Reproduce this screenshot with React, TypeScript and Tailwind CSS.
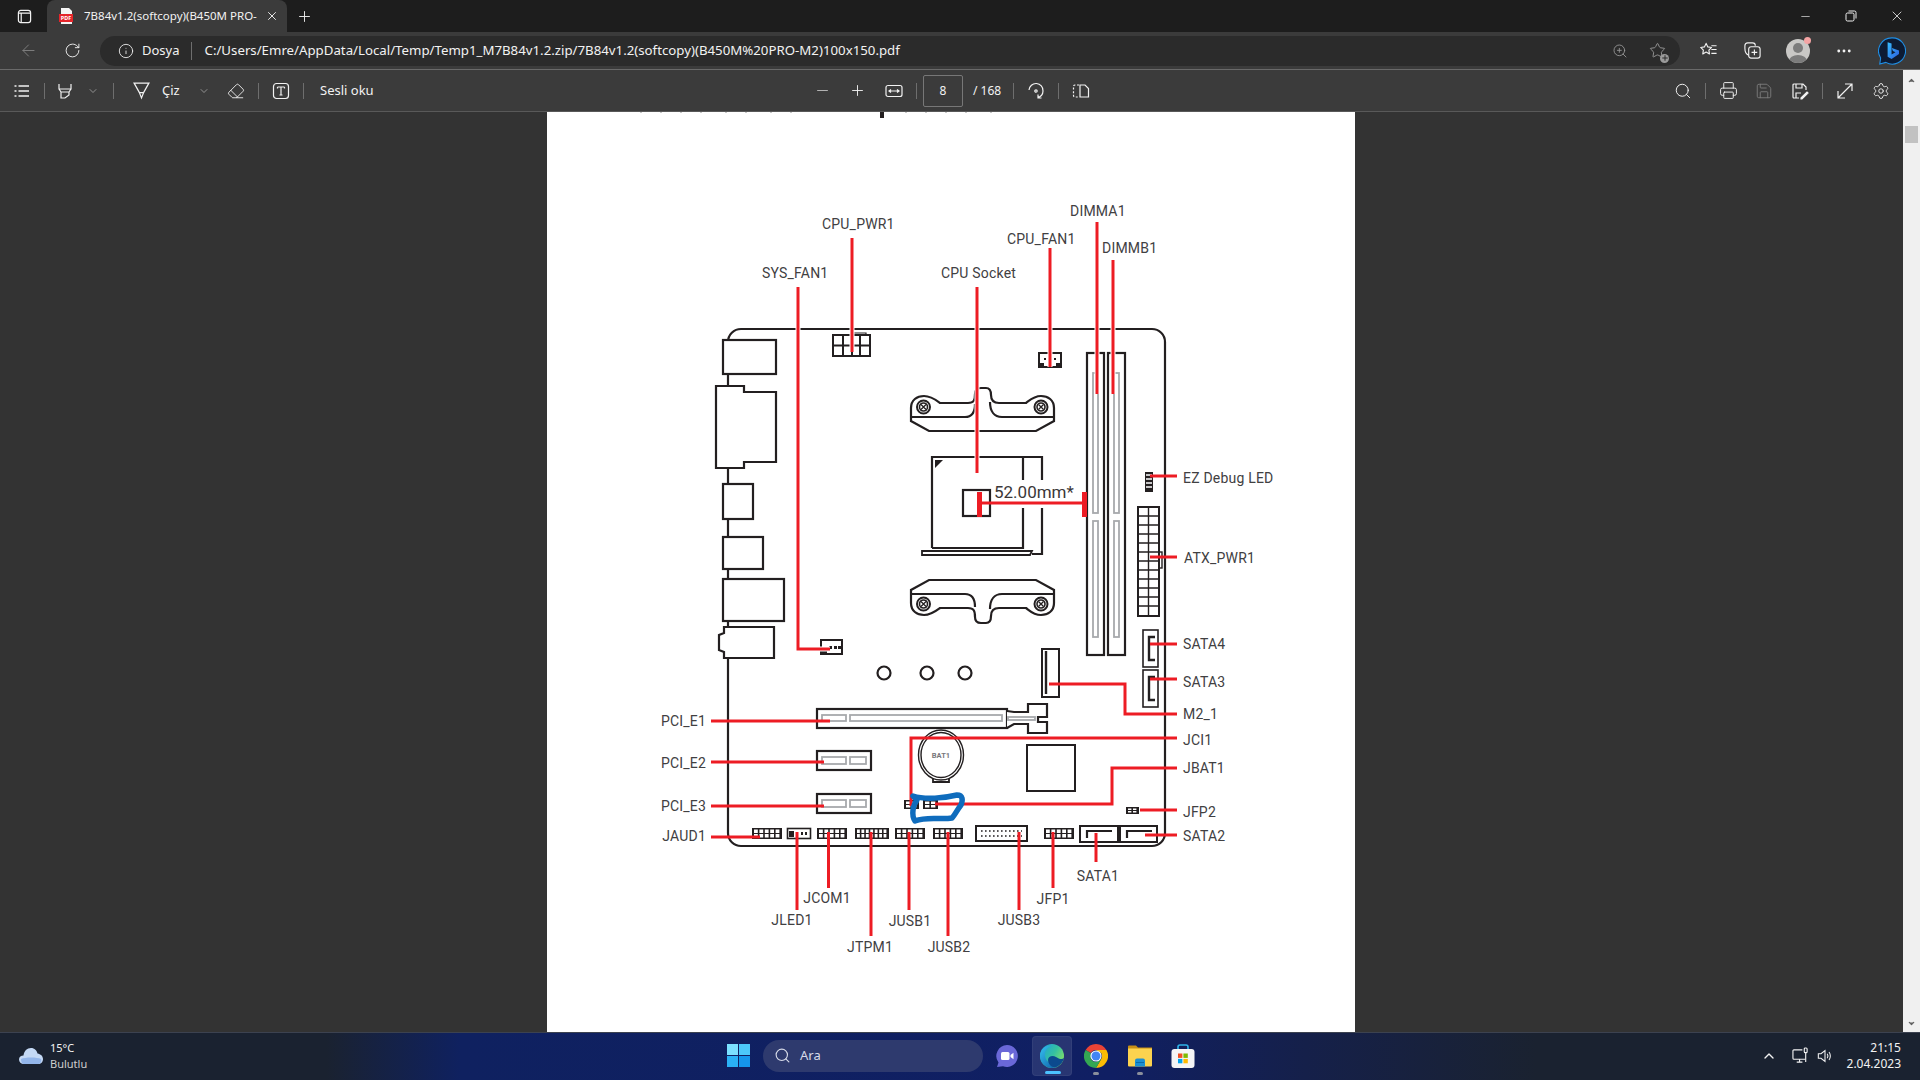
import React from "react";
import { ChevronDown, ChevronUp, Eraser, Minus, Plus, RotateCw, Search, Settings, X, Printer, Save, MoreHorizontal, Info, ArrowLeft, Star, ZoomIn } from "lucide-react";

const RED = "#ed1c24";
const INK = "#231f20";
const SLOT = "#a7a9ac";

const redLines = [
  "798,287 798,649 830,649",
  "852,238 852,352",
  "977,287 977,473",
  "1050,248 1050,367",
  "1097,222 1097,394",
  "1113,260 1113,394",
  "980,503 1083,503",
  "1150,476 1177,476",
  "1150,557 1177,557",
  "1150,644 1177,644",
  "1150,679 1177,679",
  "1049,684 1125,684 1125,714 1177,714",
  "711,721 830,721",
  "711,762 824,762",
  "711,806 824,806",
  "711,837 760,837",
  "1177,738 911,738 911,806",
  "1177,768 1112,768 1112,804 935,804",
  "1177,810 1140,810",
  "1177,835 1145,835",
  "1096,833 1096,862",
  "1053,832 1053,888",
  "1019,832 1019,910",
  "948,832 948,936",
  "909,832 909,910",
  "871,832 871,936",
  "828.5,832 828.5,888",
  "797,832 797,910",
];

type Label = { t: string; x: number; y: number; a?: "start" | "middle" | "end" };

const labels: Label[] = [
  { t: "CPU_PWR1", x: 822, y: 229 },
  { t: "DIMMA1", x: 1070, y: 216 },
  { t: "CPU_FAN1", x: 1007, y: 244 },
  { t: "DIMMB1", x: 1102, y: 253 },
  { t: "SYS_FAN1", x: 762, y: 278 },
  { t: "CPU Socket", x: 941, y: 278 },
  { t: "EZ Debug LED", x: 1183, y: 483 },
  { t: "ATX_PWR1", x: 1184, y: 563 },
  { t: "SATA4", x: 1183, y: 649 },
  { t: "SATA3", x: 1183, y: 687 },
  { t: "M2_1", x: 1183, y: 719 },
  { t: "JCI1", x: 1183, y: 745 },
  { t: "JBAT1", x: 1183, y: 773 },
  { t: "JFP2", x: 1183, y: 817 },
  { t: "SATA2", x: 1183, y: 841 },
  { t: "PCI_E1", x: 706, y: 726, a: "end" },
  { t: "PCI_E2", x: 706, y: 768, a: "end" },
  { t: "PCI_E3", x: 706, y: 811, a: "end" },
  { t: "JAUD1", x: 706, y: 841, a: "end" },
  { t: "SATA1", x: 1098, y: 881, a: "middle" },
  { t: "JFP1", x: 1053, y: 904, a: "middle" },
  { t: "JCOM1", x: 827, y: 903, a: "middle" },
  { t: "JLED1", x: 792, y: 925, a: "middle" },
  { t: "JUSB1", x: 910, y: 926, a: "middle" },
  { t: "JUSB3", x: 1019, y: 925, a: "middle" },
  { t: "JTPM1", x: 870, y: 952, a: "middle" },
  { t: "JUSB2", x: 949, y: 952, a: "middle" },
];

const PinHeader = ({ x, y, w, h, cols }: { x: number; y: number; w: number; h: number; cols: number }) => {
  const step = (w - 3) / cols;
  return (
    <g>
      <rect x={x} y={y} width={w} height={h} fill={INK} />
      {Array.from({ length: cols }).map((_, i) => (
        <g key={i}>
          <rect x={x + 2 + i * step} y={y + 1.5} width={step - 1.6} height={(h - 4) / 2} fill="#fff" />
          <rect x={x + 2 + i * step} y={y + h / 2 + 0.5} width={step - 1.6} height={(h - 4) / 2} fill="#fff" />
        </g>
      ))}
    </g>
  );
};

const Screw = ({ cx, cy }: { cx: number; cy: number }) => (
  <g>
    <circle cx={cx} cy={cy} r="6.5" strokeWidth="2" />
    <circle cx={cx} cy={cy} r="4" strokeWidth="1.6" />
    <path d={`M${cx - 2.5} ${cy - 2.5} L${cx + 2.5} ${cy + 2.5} M${cx + 2.5} ${cy - 2.5} L${cx - 2.5} ${cy + 2.5}`} strokeWidth="1.3" />
  </g>
);

const Bracket = () => (
  <g fill="none" stroke={INK} strokeWidth="2.2">
    <path d="M911 421 L911 408 C911 400 917 396 924 396 C931 396 936 400 940 403 L968 403 C974 403 975 400 975 394 C975 390 977 388 981 388 L986 388 C990 388 991 391 991 395 C991 400 993 403 999 403 L1026 403 C1030 400 1034 396 1041 396 C1048 396 1054 400 1054 408 L1054 421 L1036 431 L929 431 Z" fill="#fff" />
    <path d="M911 417 L965 417 C972 417 975 413 975 404 M1054 417 L1002 417 C994 417 990 411 990 402" />
    <Screw cx={923.5} cy={407} />
    <Screw cx={1041} cy={407} />
  </g>
);

const Diagram = () => (
  <svg viewBox="547 112 808 920" className="block h-[920px] w-[808px] font-['Roboto',sans-serif]">
    <rect x="880" y="112" width="4" height="6" fill={INK} />
    <g fill="#c9c9c9">
      {[640, 660, 680, 700, 725, 745, 770, 790, 905, 925, 945, 965, 990].map((x) => (
        <rect key={x} x={x} y="112" width="2" height="1" />
      ))}
    </g>
    <rect x="728" y="329" width="437" height="517" rx="13" fill="#fff" stroke={INK} strokeWidth="2.2" />

    {/* io panel */}
    <g fill="#fff" stroke={INK} strokeWidth="2.2">
      <rect x="723" y="340" width="53" height="34" />
      <path d="M716 386 L744 386 L744 392 L776 392 L776 462 L744 462 L744 468 L716 468 Z" />
      <rect x="723" y="484" width="30" height="35" />
      <rect x="723" y="537" width="40" height="32" />
      <rect x="723" y="579" width="61" height="42" />
      <path d="M724 627 L774 627 L774 658 L724 658 L724 652 L719 650 L719 635 L724 633 Z" />
    </g>

    {/* cpu power and fan */}
    <g fill="none" stroke={INK} strokeWidth="2">
      <path d="M851 335 L851 333 L866 333 L866 335" strokeWidth="1.2" />
      <rect x="833" y="335" width="37" height="21" fill="#fff" />
      <path d="M833 345.5 L870 345.5 M843 335 L843 356 M852 335 L852 356 M860 335 L860 356" />
      <rect x="1039" y="353" width="22" height="14" fill="#fff" />
    </g>
    <path d="M1040 363 h4 v3 h-4 z M1056 363 h4 v3 h-4 z M1044 358 h2 v2 h-2 z M1054 358 h2 v2 h-2 z" fill={INK} />

    <Bracket />
    <g transform="translate(0 1011) scale(1 -1)">
      <Bracket />
    </g>

    {/* socket */}
    <g fill="none" stroke={INK} strokeWidth="2.2">
      <path d="M932 548 L932 457 L1042 457 L1042 554 L1032 554" />
      <path d="M1023 457 L1023 548 L932 548" />
    </g>
    <path d="M935 460 L943 460 L935 468 Z" fill={INK} />
    <path d="M922 551 L1032 551 L1030 555 L922 555 Z" fill="#fff" stroke={INK} strokeWidth="1.8" />
    <rect x="990" y="480" width="88" height="28" fill="#fff" />
    <rect x="963" y="490" width="27" height="26" fill="#fff" stroke={INK} strokeWidth="2.2" />

    {/* dimm slots */}
    <g fill="#fff" stroke={INK} strokeWidth="2.2">
      <rect x="1087" y="353" width="17" height="302" />
      <rect x="1108" y="353" width="17" height="302" />
    </g>
    <g fill="none" stroke={SLOT} strokeWidth="1.8">
      <rect x="1093" y="373" width="5" height="140" />
      <rect x="1093" y="521" width="5" height="116" />
      <rect x="1114" y="373" width="5" height="140" />
      <rect x="1114" y="521" width="5" height="116" />
    </g>

    {/* right edge connectors */}
    <rect x="1145" y="472" width="8" height="20" fill={INK} />
    <path d="M1146 475 h6 M1146 479 h6 M1146 483 h6 M1146 487 h6" stroke="#fff" strokeWidth="1.4" />
    <rect x="1159" y="552" width="3" height="16" fill="#fff" stroke={INK} strokeWidth="1.4" />
    <rect x="1138" y="507" width="21" height="109" fill="#fff" stroke={INK} strokeWidth="2" />
    <path
      d="M1148.5 507 V616 M1138 516 H1159 M1138 525 H1159 M1138 534 H1159 M1138 543 H1159 M1138 552 H1159 M1138 561 H1159 M1138 570 H1159 M1138 579 H1159 M1138 588 H1159 M1138 597 H1159 M1138 606 H1159"
      stroke={INK}
      strokeWidth="1.4"
    />
    <g fill="none" stroke={INK}>
      <rect x="1143" y="630" width="15" height="37" strokeWidth="1.6" />
      <path d="M1155 637 H1149 V660 H1155" strokeWidth="2.4" />
      <rect x="1143" y="670" width="15" height="37" strokeWidth="1.6" />
      <path d="M1155 677 H1149 V700 H1155" strokeWidth="2.4" />
      <rect x="1042" y="649" width="17" height="48" strokeWidth="2" />
      <path d="M1046 651 V694" strokeWidth="2.4" />
    </g>

    <g fill="#fff" stroke={INK} strokeWidth="2.2">
      <circle cx="884" cy="673" r="6.5" />
      <circle cx="927" cy="673" r="6.5" />
      <circle cx="965" cy="673" r="6.5" />
    </g>

    {/* fan header */}
    <rect x="821" y="640" width="21" height="14" fill="#fff" stroke={INK} strokeWidth="2" />
    <path d="M821 651 h6 v3 h-6 z M829 646 h3 v3 h-3 z M834 646 h3 v3 h-3 z M838 646 h3 v3 h-3 z" fill={INK} />

    {/* pci slots */}
    <g fill="#fff" stroke={INK} strokeWidth="2.2">
      <rect x="817" y="709" width="190" height="19" />
      <path d="M1007 711 L1014 712 L1028 712 L1028 704 L1047 704 L1047 717 L1038 717 L1038 722 L1047 722 L1047 733 L1028 733 L1028 724 L1014 724 L1007 728" />
      <rect x="817" y="751" width="54" height="19" />
      <rect x="817" y="794" width="54" height="19" />
    </g>
    <g fill="none" stroke={SLOT} strokeWidth="1.8">
      <rect x="822" y="715" width="24" height="6" />
      <rect x="850" y="715" width="152" height="6" />
      <rect x="1008" y="717" width="27" height="3" />
      <rect x="822" y="757" width="24" height="7" />
      <rect x="850" y="757" width="16" height="7" />
      <rect x="822" y="800" width="24" height="7" />
      <rect x="850" y="800" width="16" height="7" />
    </g>

    {/* battery */}
    <g fill="#fff" stroke={INK}>
      <path d="M933 775 L933 782 L949 782 L949 775" strokeWidth="1.8" />
      <ellipse cx="941" cy="755" rx="22.5" ry="25" strokeWidth="1.4" />
      <ellipse cx="941" cy="755" rx="20" ry="22.5" strokeWidth="1.4" />
    </g>
    <text x="941" y="758" textAnchor="middle" fontSize="7.5" fontWeight="700" fill="#77787b">BAT1</text>
    <rect x="1027" y="745" width="48" height="46" fill="#fff" stroke={INK} strokeWidth="2" />

    {/* bottom connectors */}
    <PinHeader x={904} y={800} w={15} h={9} cols={2} />
    <PinHeader x={923} y={800} w={15} h={9} cols={2} />
    <PinHeader x={1126} y={807} w={13} h={7} cols={2} />
    <PinHeader x={752} y={828} w={30} h={11} cols={5} />
    <rect x="787.5" y="828.5" width="23" height="10" fill="#fff" stroke={INK} strokeWidth="1.6" />
    <path d="M789 831 h5 v6 h-5 z M801 832 h2 v3 h-2 z M805 832 h2 v3 h-2 z" fill={INK} />
    <PinHeader x={817} y={828} w={30} h={11} cols={5} />
    <PinHeader x={855} y={828} w={34} h={11} cols={7} />
    <PinHeader x={895} y={828} w={30} h={11} cols={5} />
    <PinHeader x={933} y={828} w={30} h={11} cols={5} />
    <PinHeader x={1044} y={828} w={30} h={11} cols={5} />
    <rect x="976" y="826" width="51" height="15" fill="#fff" stroke={INK} strokeWidth="2" />
    <path d="M981 831 H1022 M981 836 H1022" stroke={INK} strokeWidth="1.6" strokeDasharray="1.6 2.4" />
    <g fill="#fff" stroke={INK}>
      <rect x="1080" y="826" width="38" height="16" strokeWidth="2" />
      <path d="M1112 831 H1087 V838" fill="none" strokeWidth="2.2" />
      <rect x="1120" y="826" width="37" height="16" strokeWidth="2" />
      <path d="M1152 831 H1127 V838" fill="none" strokeWidth="2.2" />
    </g>

    {/* leader lines */}
    <g fill="none" stroke="#fff" strokeWidth="5">
      {redLines.slice(0, 6).map((p) => (
        <polyline key={p} points={p} />
      ))}
    </g>
    <g fill="none" stroke={RED} strokeWidth="3">
      {redLines.map((p) => (
        <polyline key={p} points={p} />
      ))}
    </g>
    <rect x="977" y="492" width="5" height="25" fill={RED} />
    <rect x="1082" y="492" width="5" height="25" fill={RED} />
    <text x="994" y="498" fontSize="17" fill="#3b3738">52.00mm*</text>
    <g fontSize="14" fill="#414042" letterSpacing="0.2">
      {labels.map((l) => (
        <text key={l.t} x={l.x} y={l.y} textAnchor={l.a ?? "start"}>
          {l.t}
        </text>
      ))}
    </g>

    {/* hand drawn highlight */}
    <path
      d="M913 796 C925 800 945 798 957 795 C963 795 963 800 961 805 C957 810 955 815 952 818 C940 820 928 816 915 821 C911 815 913 805 917 800 Z"
      fill="none"
      stroke="#0f6cbd"
      strokeWidth="5.5"
      strokeLinejoin="round"
    />
  </svg>
);

const Divider = ({ className }: { className: string }) => <div className={`h-4 w-px shrink-0 bg-[#6e6e6e] ${className}`} />;

const Tool = ({ className = "", children }: { className?: string; children: React.ReactNode }) => (
  <div className={`flex h-7 w-7 shrink-0 items-center justify-center ${className}`}>{children}</div>
);

const EdgeLogo = () => (
  <svg viewBox="0 0 24 24" className="h-6 w-6">
    <defs>
      <linearGradient id="edgeA" x1="0" y1="0" x2="1" y2="1">
        <stop offset="0" stopColor="#35c1f1" />
        <stop offset="1" stopColor="#0c59a4" />
      </linearGradient>
      <linearGradient id="edgeB" x1="0" y1="0" x2="1" y2="0.6">
        <stop offset="0" stopColor="#1b9de2" />
        <stop offset="0.6" stopColor="#35c1a0" />
        <stop offset="1" stopColor="#7fe06a" />
      </linearGradient>
    </defs>
    <circle cx="12" cy="12" r="12" fill="url(#edgeB)" />
    <path d="M0 12 C0 5 6 1 12 2 C7 3 4 7 5 12 C6 18 13 23 19 22 C17 23 14 24 12 24 C5 24 0 18 0 12 Z" fill="url(#edgeA)" />
    <path d="M8 16 C8 12 13 11 16 13 C19 15 22 16 24 14 C23 19 18 24 13 23 C10 22 8 19 8 16 Z" fill="#0c4a8e" />
  </svg>
);

const ChromeLogo = () => (
  <svg viewBox="0 0 24 24" className="h-6 w-6">
    <path d="M12 0 A12 12 0 0 1 22.4 6 L12 6 A6 6 0 0 0 6.8 9 L1.6 6 A12 12 0 0 1 12 0 Z" fill="#ea4335" />
    <path d="M22.4 6 A12 12 0 0 1 12 24 L17.2 15 A6 6 0 0 0 17.2 9 L12 6 Z" fill="#fbbc04" />
    <path d="M1.6 6 L6.8 9 L6.8 15 A6 6 0 0 0 12 18 L17.2 15 L12 24 A12 12 0 0 1 1.6 6 Z" fill="#34a853" />
    <circle cx="12" cy="12" r="5.6" fill="#fff" />
    <circle cx="12" cy="12" r="4.5" fill="#4285f4" />
  </svg>
);

const FolderLogo = () => (
  <svg viewBox="0 0 24 22" className="h-[23px] w-6">
    <path d="M0 2 A1 1 0 0 1 1 1 H8 L10 3 H24 V6 H0 Z" fill="#c78f16" />
    <path d="M0 4 H24 V21 A1 1 0 0 1 23 22 H1 A1 1 0 0 1 0 21 Z" fill="#fcd34f" />
    <path d="M7 16 A2 2 0 0 1 9 14 H15 A2 2 0 0 1 17 16 V22 H7 Z" fill="#1d8fd1" />
    <path d="M8 18 H16" stroke="#0b6aa8" strokeWidth="1" />
  </svg>
);

const StoreLogo = () => (
  <svg viewBox="0 0 24 24" className="h-6 w-6">
    <path d="M7 7 V3 A2 2 0 0 1 9 1 H15 A2 2 0 0 1 17 3 V7" fill="none" stroke="#2fb4e9" strokeWidth="1.6" />
    <rect x="0.5" y="5" width="23" height="19" rx="3" fill="#f5f5f5" />
    <rect x="7" y="9.5" width="4.4" height="4.4" fill="#f25022" />
    <rect x="12.4" y="9.5" width="4.4" height="4.4" fill="#7fba00" />
    <rect x="7" y="14.9" width="4.4" height="4.4" fill="#00a4ef" />
    <rect x="12.4" y="14.9" width="4.4" height="4.4" fill="#ffb900" />
  </svg>
);

const BingLogo = () => (
  <svg viewBox="0 0 32 32" className="h-[30px] w-[30px]">
    <defs>
      <linearGradient id="bingB" x1="0" y1="0" x2="1" y2="1">
        <stop offset="0" stopColor="#37bdff" />
        <stop offset="1" stopColor="#2b5fe0" />
      </linearGradient>
    </defs>
    <path d="M16 1 A15 15 0 1 1 9 29 L2 31 L3 24 A15 15 0 0 1 16 1 Z" fill="#0d1b33" stroke="#1f8fe6" strokeWidth="1.2" />
    <path d="M11 6 L15.5 7.5 V20 L20 17.5 L17 16 L15.8 12.5 L24 15.5 V19.5 L15.5 25 L11 22.5 Z" fill="url(#bingB)" />
  </svg>
);

const App: React.FC = () => {
  return (
    <div className="flex h-[1080px] w-[1920px] flex-col overflow-hidden bg-[#333333] font-['Noto_Sans',sans-serif] text-[#f2f2f2]">
      {/* tab strip */}
      <div className="flex h-8 shrink-0 items-end bg-[#1d1d1d]">
        <div className="flex h-8 w-[47px] items-center justify-center pl-[1px]">
          <svg viewBox="0 0 16 16" className="h-[15px] w-[15px]" fill="none" stroke="#f2f2f2" strokeWidth="1.3">
            <rect x="1.5" y="1.5" width="13" height="13" rx="2.5" />
            <path d="M1.5 4.5 H14.5 M4.5 4.5 V14.5" />
          </svg>
        </div>
        <div className="flex h-8 w-[240px] items-center rounded-t-lg bg-[#3b3b3b] pl-[11px]">
          <svg viewBox="0 0 16 18" className="h-[18px] w-4 shrink-0">
            <path d="M3 1 H11 L14 4 V17 H3 Z" fill="#f4f4f4" />
            <rect x="1" y="7" width="14" height="8" fill="#e5252a" />
            <text x="8" y="13" fontSize="5.4" fontWeight="700" textAnchor="middle" fill="#fff">PDF</text>
          </svg>
          <span className="ml-[10px] w-[176px] text-[11.5px] whitespace-nowrap">7B84v1.2(softcopy)(B450M PRO-</span>
          <X className="ml-[5px] h-[14px] w-[14px]" strokeWidth={1.6} />
        </div>
        <div className="flex h-8 w-[34px] items-center justify-center">
          <Plus className="h-[17px] w-[17px]" strokeWidth={1.3} />
        </div>
        <div className="ml-auto flex h-8 items-center">
          <div className="flex w-[46px] justify-center"><Minus className="h-[13px] w-[13px]" strokeWidth={1.2} /></div>
          <div className="flex w-[46px] justify-center">
            <svg viewBox="0 0 12 12" className="h-3 w-3" fill="none" stroke="#f2f2f2" strokeWidth="1">
              <rect x="1" y="3" width="8" height="8" rx="1.5" />
              <path d="M3.5 1 H9.5 A1.5 1.5 0 0 1 11 2.5 V8.5" />
            </svg>
          </div>
          <div className="flex w-[46px] justify-center"><X className="h-4 w-4" strokeWidth={1.2} /></div>
        </div>
      </div>

      {/* address row */}
      <div className="flex h-[38px] shrink-0 items-center border-b border-[#6a6a6a] bg-[#3b3b3b]">
        <Tool className="ml-[14px] text-[#808080]"><ArrowLeft className="h-[19px] w-[19px]" strokeWidth={1.2} /></Tool>
        <Tool className="ml-[16px]"><RotateCw className="h-[17px] w-[17px]" strokeWidth={1.3} /></Tool>
        <div className="ml-[14px] flex h-[30px] w-[1580px] items-center rounded-full bg-[#2b2b2b] pl-[18px]">
          <Info className="h-4 w-4" strokeWidth={1.3} />
          <span className="ml-[8px] text-[13px]">Dosya</span>
          <div className="ml-[11px] h-[18px] w-px bg-[#6e6e6e]" />
          <span className="ml-[13px] text-[13.25px] whitespace-nowrap">C:/Users/Emre/AppData/Local/Temp/Temp1_M7B84v1.2.zip/7B84v1.2(softcopy)(B450M%20PRO-M2)100x150.pdf</span>
          <Tool className="ml-auto text-[#9a9a9a]"><ZoomIn className="h-4 w-4" strokeWidth={1.3} /></Tool>
          <Tool className="relative mr-[9px] ml-[9px] text-[#9a9a9a]">
            <Star className="h-[17px] w-[17px]" strokeWidth={1.3} />
            <div className="absolute right-[2px] bottom-[2px] flex h-[9px] w-[9px] items-center justify-center rounded-full bg-[#9a9a9a]">
              <Plus className="h-2 w-2 text-[#2b2b2b]" strokeWidth={3} />
            </div>
          </Tool>
        </div>
        <Tool className="ml-[14px]">
          <svg viewBox="0 0 20 20" className="h-[19px] w-[19px]" fill="none" stroke="#f2f2f2" strokeWidth="1.2" strokeLinejoin="round">
            <path d="M7.5 2.5 L9.3 6.2 L13.2 6.8 L10.4 9.6 L11 13.6 L7.5 11.7 L4 13.6 L4.6 9.6 L1.8 6.8 L5.7 6.2 Z" />
            <path d="M13 5 H18.5 M13 9 H18.5 M13 13 H18.5" />
          </svg>
        </Tool>
        <Tool className="ml-[16px]">
          <svg viewBox="0 0 20 20" className="h-[19px] w-[19px]" fill="none" stroke="#f2f2f2" strokeWidth="1.2">
            <rect x="6" y="6" width="12" height="12" rx="2.5" />
            <path d="M12 9 V15 M9 12 H15 M6 15 C3 14 2 11 2 8 V5 C2 3 3 2 5 2 H10 C12 2 13 3 13 5" />
          </svg>
        </Tool>
        <Tool className="relative ml-[18px]">
          <svg viewBox="0 0 24 24" className="h-6 w-6">
            <clipPath id="avatarClip"><circle cx="12" cy="12" r="12" /></clipPath>
            <circle cx="12" cy="12" r="12" fill="#c9c8c6" />
            <g clipPath="url(#avatarClip)" fill="#7c7c7c">
              <circle cx="12" cy="9" r="5" />
              <ellipse cx="12" cy="22" rx="9" ry="6" />
            </g>
          </svg>
          <div className="absolute top-0 right-[1px] h-[7px] w-[7px] rounded-full bg-[#f4a4a4]" />
        </Tool>
        <Tool className="ml-[18px]"><MoreHorizontal className="h-[18px] w-[18px]" strokeWidth={1.8} /></Tool>
        <Tool className="ml-[20px]"><BingLogo /></Tool>
      </div>

      <div className="flex min-h-0 flex-1">
        <div className="flex min-w-0 flex-1 flex-col">
          {/* pdf toolbar */}
          <div className="flex h-[42px] shrink-0 items-center border-b border-[#595959] bg-[#3b3b3b]">
            <div className="flex w-[808px] shrink-0 items-center">
              <Tool className="ml-[8px]">
                <svg viewBox="0 0 18 18" className="h-[18px] w-[18px]" stroke="#f2f2f2" strokeWidth="1.3">
                  <path d="M5.5 4 H16 M5.5 9 H16 M5.5 14 H16 M1.5 4 H3.5 M1.5 9 H3.5 M1.5 14 H3.5" />
                </svg>
              </Tool>
              <Divider className="ml-[8px]" />
              <Tool className="ml-[6px]">
                <svg viewBox="0 0 18 18" className="h-[18px] w-[18px]" fill="none" stroke="#f2f2f2" strokeWidth="1.2">
                  <path d="M3 2 V7 H15 V2 M3 7 L5 10 H13 L15 7 M5 10 V16 H9 L13 13 V10" />
                </svg>
              </Tool>
              <ChevronDown className="ml-[6px] h-3 w-4 text-[#bdbdbd]" strokeWidth={1.3} />
              <Divider className="ml-[12px]" />
              <Tool className="ml-[13px]">
                <svg viewBox="0 0 18 18" className="h-[19px] w-[19px]" fill="none" stroke="#f2f2f2" strokeWidth="1.2">
                  <path d="M2 2 H16 L11 11 H7 Z M7 11 L9 16 L11 11" />
                </svg>
              </Tool>
              <span className="ml-[7px] w-[19px] text-[13px]">Çiz</span>
              <ChevronDown className="ml-[15px] h-3 w-4 text-[#bdbdbd]" strokeWidth={1.3} />
              <Tool className="ml-[10px]"><Eraser className="h-[18px] w-[18px]" strokeWidth={1.2} /></Tool>
              <Divider className="ml-[8px]" />
              <Tool className="ml-[8px]">
                <svg viewBox="0 0 18 18" className="h-[18px] w-[18px]" fill="none" stroke="#f2f2f2" strokeWidth="1.2">
                  <rect x="1.5" y="1.5" width="15" height="15" rx="3" />
                  <path d="M5.5 5 H12.5 M5.5 5 V6.5 M12.5 5 V6.5 M9 5 V13 M7.5 13 H10.5" />
                </svg>
              </Tool>
              <Divider className="ml-[8px]" />
              <span className="ml-[16px] text-[13px]">Sesli oku</span>
            </div>
            <Tool className="text-[#bdbdbd]"><Minus className="h-[17px] w-[17px]" strokeWidth={1.3} /></Tool>
            <Tool className="ml-[7px]"><Plus className="h-[17px] w-[17px]" strokeWidth={1.3} /></Tool>
            <Tool className="ml-[9px]">
              <svg viewBox="0 0 18 18" className="h-[18px] w-[18px]" fill="none" stroke="#f2f2f2" strokeWidth="1.2">
                <rect x="1" y="3.5" width="16" height="11" rx="2" />
                <path d="M4 9 H14 M6 7.5 L4 9 L6 10.5 M12 7.5 L14 9 L12 10.5" />
              </svg>
            </Tool>
            <Divider className="ml-[8px]" />
            <div className="ml-[6px] flex h-8 w-10 shrink-0 items-center justify-center rounded-[2px] border border-[#777777] text-[12px]">8</div>
            <span className="ml-[10px] w-[28px] text-[12px] whitespace-nowrap">/ 168</span>
            <Divider className="ml-[12px]" />
            <Tool className="ml-[8px]">
              <svg viewBox="0 0 18 18" className="h-[18px] w-[18px]" fill="none" stroke="#f2f2f2" strokeWidth="1.2">
                <path d="M2 8 A7 7 0 0 1 16 9 A7 7 0 0 1 11 15.5 M11 12.5 V16 H14.5" />
                <circle cx="9" cy="9" r="1.2" />
              </svg>
            </Tool>
            <Divider className="ml-[8px]" />
            <Tool className="ml-[8px]">
              <svg viewBox="0 0 18 18" className="h-[18px] w-[18px]" fill="none" stroke="#f2f2f2" strokeWidth="1.2">
                <path d="M7 3 H3 A1.5 1.5 0 0 0 1.5 4.5 V13.5 A1.5 1.5 0 0 0 3 15 H7" strokeDasharray="2 1.6" />
                <path d="M8 3 H13 L16.5 6.5 V15 H8 Z" />
              </svg>
            </Tool>
            <div className="ml-auto flex items-center gap-2 pr-2">
              <Tool><Search className="h-[18px] w-[18px]" strokeWidth={1.3} /></Tool>
              <Divider className="" />
              <Tool><Printer className="h-[19px] w-[19px]" strokeWidth={1.2} /></Tool>
              <Tool className="text-[#7d7d7d]"><Save className="h-[18px] w-[18px]" strokeWidth={1.2} /></Tool>
              <Tool>
                <svg viewBox="0 0 18 18" className="h-[18px] w-[18px]" fill="none" stroke="#f2f2f2" strokeWidth="1.2">
                  <path d="M8 16 H3 A1 1 0 0 1 2 15 V3 A1 1 0 0 1 3 2 H12 L15 5 V8 M5 2 V6 H11 V2 M5 16 V11 H10" />
                  <path d="M10 16 L16 10 L17 11 L11 17 H10 Z" fill="#f2f2f2" />
                </svg>
              </Tool>
              <Divider className="" />
              <Tool>
                <svg viewBox="0 0 18 18" className="h-[18px] w-[18px]" fill="none" stroke="#f2f2f2" strokeWidth="1.2">
                  <path d="M2 16 L16 2 M9 2 H16 V9 M2 9 V16 H9" />
                </svg>
              </Tool>
              <Tool><Settings className="h-[18px] w-[18px]" strokeWidth={1.2} /></Tool>
            </div>
          </div>

          {/* document */}
          <div className="min-h-0 flex-1 overflow-hidden pl-[547px]">
            <div className="h-full w-[808px] bg-white">
              <Diagram />
            </div>
          </div>
        </div>

        {/* scrollbar */}
        <div className="flex w-[17px] shrink-0 flex-col items-center bg-[#f0f0f0] pt-[6px]">
          <ChevronUp className="h-[9px] w-[9px] fill-[#606060] text-[#606060]" strokeWidth={3} />
          <div className="mt-[41px] h-[17px] w-[13px] bg-[#c2c2c2]" />
          <ChevronDown className="mt-auto mb-[4px] h-[9px] w-[9px] fill-[#606060] text-[#606060]" strokeWidth={3} />
        </div>
      </div>

      {/* taskbar */}
      <div className="flex h-12 shrink-0 items-center border-t border-[#3c4250] bg-[linear-gradient(90deg,#1a2230_0%,#1a2230_17%,#0f2160_24%,#101f63_58%,#15204a_68%,#1a2230_80%,#1a2230_100%)] pb-[2px]">
        <div className="flex w-[727px] shrink-0 items-center pl-[19px]">
          <svg viewBox="0 0 24 17" className="h-[17px] w-6">
            <path d="M5 17 C2 17 0 15 0 12.5 C0 10 2 8.5 4.5 8.5 C5 4 8 1 12 1 C15.5 1 18 3.5 18.5 6.5 C21.5 7 24 9 24 12 C24 15 22 17 19 17 Z" fill="#c4d9f5" />
            <path d="M2 12 C6 10 18 10 22 12 C23 15 21 17 19 17 H5 C3 17 2 15 2 12 Z" fill="#93b6ea" />
          </svg>
          <div className="ml-[7px] flex flex-col text-[11px] leading-[16px]">
            <span>15°C</span>
            <span className="text-[#cfcfcf]">Bulutlu</span>
          </div>
        </div>
        <svg viewBox="0 0 23 23" className="h-[23px] w-[23px] shrink-0">
          <rect width="11" height="11" fill="#7be0ff" />
          <rect x="12" width="11" height="11" fill="#4cc8fb" />
          <rect y="12" width="11" height="11" fill="#2ab1f5" />
          <rect x="12" y="12" width="11" height="11" fill="#1596ec" />
        </svg>
        <div className="ml-[13px] flex h-8 w-[220px] shrink-0 items-center rounded-full bg-[#2e3a6e] pl-[11px] text-[#d7dbe8]">
          <Search className="h-[17px] w-[17px]" strokeWidth={1.6} />
          <span className="ml-[9px] text-[13px]">Ara</span>
        </div>
        <div className="ml-[12px] flex h-6 w-6 shrink-0 items-center justify-center">
          <svg viewBox="0 0 24 24" className="h-6 w-6">
            <path d="M12 1 A11 11 0 1 1 8 22.3 L2 23 L3.5 18.5 A11 11 0 0 1 12 1 Z" fill="#6a68d8" />
            <rect x="6" y="8" width="8.5" height="8" rx="1.5" fill="#fff" />
            <path d="M15.5 11 L18.5 8.8 V15.2 L15.5 13 Z" fill="#fff" />
          </svg>
        </div>
        <div className="relative ml-[13px] flex h-10 w-10 shrink-0 items-center justify-center rounded-[4px] border border-white/5 bg-white/10">
          <EdgeLogo />
          <div className="absolute bottom-[1px] left-[12px] h-[3px] w-[16px] rounded-full bg-[#4cc2ff]" />
        </div>
        <div className="relative ml-[12px] flex h-10 w-6 shrink-0 items-center justify-center">
          <ChromeLogo />
          <div className="absolute bottom-[1px] left-[9px] h-[3px] w-[6px] rounded-full bg-[#8a8f9c]" />
        </div>
        <div className="relative ml-[20px] flex h-10 w-6 shrink-0 items-center justify-center">
          <FolderLogo />
          <div className="absolute bottom-[1px] left-[9px] h-[3px] w-[6px] rounded-full bg-[#8a8f9c]" />
        </div>
        <div className="ml-[19px] flex h-10 w-6 shrink-0 items-center justify-center">
          <StoreLogo />
        </div>
        <div className="ml-auto flex items-center pr-[19px]">
          <ChevronUp className="h-[16px] w-[16px]" strokeWidth={2} />
          <svg viewBox="0 0 18 18" className="ml-[15px] h-[17px] w-[17px]" fill="none" stroke="#f2f2f2" strokeWidth="1.2">
            <path d="M11 3 H2 A1 1 0 0 0 1 4 V12 A1 1 0 0 0 2 13 H14 M8 13 V16 M5 16 H11" />
            <rect x="13" y="1" width="3" height="5" rx="1" />
            <path d="M14.5 6 V16" />
          </svg>
          <svg viewBox="0 0 18 18" className="ml-[8px] h-[16px] w-[16px]" fill="none" stroke="#f2f2f2" strokeWidth="1.2">
            <path d="M1.5 6.5 H4.5 L9 3 V15 L4.5 11.5 H1.5 Z M11.5 6.5 C12.5 8 12.5 10 11.5 11.5 M13.5 4.5 C15.5 7 15.5 11 13.5 13.5" />
          </svg>
          <div className="ml-[8px] flex w-[60px] flex-col items-end text-[12px] leading-[16px]">
            <span>21:15</span>
            <span>2.04.2023</span>
          </div>
        </div>
      </div>
    </div>
  );
};

export default App;
